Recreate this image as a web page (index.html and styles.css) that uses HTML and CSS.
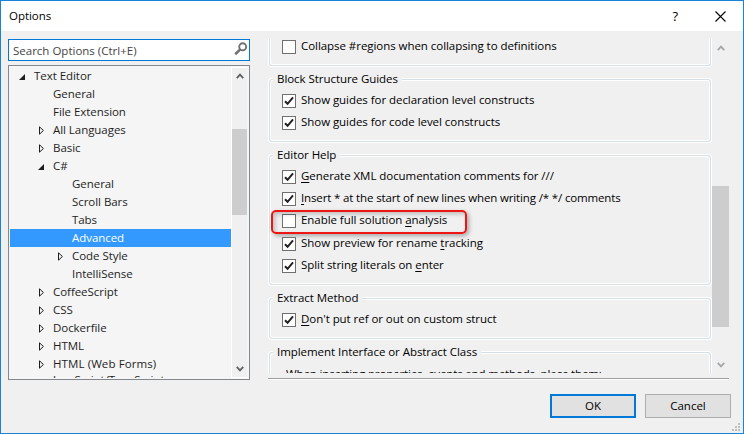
FILE: index.html
```
<!DOCTYPE html>
<html lang="en">
<head>
<meta charset="utf-8">
<title>Options</title>
<link rel="stylesheet" href="styles.css">
</head>
<body>
<svg width="0" height="0" class="defs">
  <symbol id="open" viewBox="0 0 6 6"><path d="M6 0V6H0z" fill="#1e1e1e"/></symbol>
  <symbol id="closed" viewBox="0 0 6 9"><path d="M.5 .8V8.2L4.4 4.5z" fill="none" stroke="#1e1e1e"/></symbol>
  <symbol id="check" viewBox="0 0 12 12"><path d="M2 6.2L4.6 8.8L10 2.4" fill="none" stroke="#212121" stroke-width="2"/></symbol>
  <symbol id="up" viewBox="0 0 8 6"><path d="M.8 5.2L4 1.7L7.2 5.2" fill="none" stroke="currentColor" stroke-width="1.8"/></symbol>
  <symbol id="down" viewBox="0 0 8 6"><path d="M.8 .8L4 4.3L7.2 .8" fill="none" stroke="currentColor" stroke-width="1.8"/></symbol>
</svg>
<div class="window">
  <header class="titlebar">
    <span class="title">Options</span>
    <span class="help">?</span>
    <svg class="close" width="11" height="11" viewBox="0 0 11 11"><path d="M.5 .5L10.5 10.5M10.5 .5L.5 10.5" stroke="#000" stroke-width="1.1"/></svg>
  </header>
  <main class="content">
    <aside class="sidebar">
      <div class="search"><span>Search Options (Ctrl+E)</span>
        <svg width="14" height="14" viewBox="0 0 14 14"><circle cx="8.7" cy="4.8" r="3.5" fill="none" stroke="#717171" stroke-width="1.9"/><path d="M6 7.6L1.2 12.2" stroke="#717171" stroke-width="2.6"/></svg>
      </div>
      <div class="tree">
        <ul class="nodes">
          <li class="l0"><svg class="open"><use href="#open"/></svg><span>Text Editor</span></li>
          <li class="l1"><span>General</span></li>
          <li class="l1"><span>File Extension</span></li>
          <li class="l1"><svg class="closed"><use href="#closed"/></svg><span>All Languages</span></li>
          <li class="l1"><svg class="closed"><use href="#closed"/></svg><span>Basic</span></li>
          <li class="l1"><svg class="open"><use href="#open"/></svg><span>C#</span></li>
          <li class="l2"><span>General</span></li>
          <li class="l2"><span>Scroll Bars</span></li>
          <li class="l2"><span>Tabs</span></li>
          <li class="l2 selected"><span>Advanced</span></li>
          <li class="l2"><svg class="closed"><use href="#closed"/></svg><span>Code Style</span></li>
          <li class="l2"><span>IntelliSense</span></li>
          <li class="l1"><svg class="closed"><use href="#closed"/></svg><span>CoffeeScript</span></li>
          <li class="l1"><svg class="closed"><use href="#closed"/></svg><span>CSS</span></li>
          <li class="l1"><svg class="closed"><use href="#closed"/></svg><span>Dockerfile</span></li>
          <li class="l1"><svg class="closed"><use href="#closed"/></svg><span>HTML</span></li>
          <li class="l1 caps"><svg class="closed"><use href="#closed"/></svg><span>HTML (Web Forms)</span></li>
          <li class="l1"><span>JavaScript/TypeScript</span></li>
        </ul>
        <div class="scrollbar tree-scroll">
          <svg class="arrow"><use href="#up"/></svg>
          <div class="thumb"></div>
          <svg class="arrow"><use href="#down"/></svg>
        </div>
      </div>
    </aside>
    <section class="pane">
      <div class="viewport">
        <div class="groups">
          <fieldset class="outlining">
            <label><i class="box"></i><span>Collapse #regions when collapsing to definitions</span></label>
          </fieldset>
          <fieldset class="guides">
            <legend>Block Structure Guides</legend>
            <label><i class="box"><svg><use href="#check"/></svg></i><span>Show guides for declaration level constructs</span></label>
            <label><i class="box"><svg><use href="#check"/></svg></i><span>Show guides for code level constructs</span></label>
          </fieldset>
          <fieldset class="editor-help">
            <legend>Editor Help</legend>
            <label><i class="box"><svg><use href="#check"/></svg></i><span><u>G</u>enerate XML documentation comments for ///</span></label>
            <label><i class="box"><svg><use href="#check"/></svg></i><span class="long"><u>I</u>nsert * at the start of new lines when writing /* */ comments</span></label>
            <label class="marked"><i class="box"></i><span>Enable full solution <u>a</u>nalysis</span><b class="callout"></b></label>
            <label><i class="box"><svg><use href="#check"/></svg></i><span>Show preview for rename <u>t</u>racking</span></label>
            <label><i class="box"><svg><use href="#check"/></svg></i><span>Split string literals on <u>e</u>nter</span></label>
          </fieldset>
          <fieldset class="extract">
            <legend>Extract Method</legend>
            <label><i class="box"><svg><use href="#check"/></svg></i><span><u>D</u>on't put ref or out on custom struct</span></label>
          </fieldset>
          <fieldset class="implement">
            <legend>Implement Interface or Abstract Class</legend>
            <p>When inserting properties, events and methods, place them:</p>
          </fieldset>
        </div>
        <div class="scrollbar pane-scroll">
          <svg class="arrow"><use href="#up"/></svg>
          <div class="thumb"></div>
          <svg class="arrow"><use href="#down"/></svg>
        </div>
      </div>
      <hr>
      <footer>
        <button class="primary">OK</button>
        <button>Cancel</button>
      </footer>
    </section>
  </main>
  <svg class="grip" width="8" height="8" viewBox="0 0 8 8" fill="#bfbfbf"><path d="M6 0h2v2H6zM3 3h2v2H3zM6 3h2v2H6zM0 6h2v2H0zM3 6h2v2H3zM6 6h2v2H6z"/></svg>
</div>
</body>
</html>
```
FILE: styles.css
```
* { box-sizing: border-box; }
body { margin: 0; font: 11.5px/18px "Open Sans", "Noto Sans", sans-serif; letter-spacing: -0.05px; color: #000; }
.defs { position: absolute; }
svg { display: block; flex: none; }
.window { position: relative; width: 744px; height: 434px; border: 1px solid #1883d7; background: #f0f0f0; overflow: hidden; }
.titlebar { display: flex; align-items: center; height: 30px; padding: 0 17px 0 8px; background: #fff; }
.title { flex: 1; }
.help { margin-right: 37px; font-size: 13px; font-weight: 500; }
.content { display: flex; gap: 18px; padding: 8px 0 0 7px; }

.sidebar { width: 242px; }
.search { display: flex; justify-content: space-between; height: 22px; padding: 2px 1px 0 4px; border: 1px solid #0078d7; background: #fff; color: #444; letter-spacing: 0; }
.tree { display: flex; height: 315px; margin-top: 4px; padding: 1px 2px 1px 1px; border: 1px solid #828790; background: #f5f5f5; }
.nodes { flex: 1; margin: 0; padding: 0; list-style: none; overflow: hidden; color: #1e1e1e; }
.nodes li { display: flex; align-items: center; height: 18px; white-space: nowrap; }
.nodes span { padding-bottom: 1px; }
.nodes li:last-child span { padding-bottom: 5px; }
.l0 { padding-left: 24px; }
.l1 { padding-left: 43px; }
.l2 { padding-left: 62px; }
.caps { letter-spacing: 0.1px; }
.nodes .selected { background: #3399ff; color: #fff; }
.open { width: 6px; height: 6px; margin: 1px 9px 0 -15px; }
.closed { width: 6px; height: 9px; margin: 1px 8px 0 -14px; }
.scrollbar { display: flex; flex-direction: column; align-items: center; flex: none; }
.arrow { width: 8px; height: 6px; }
.thumb { width: 100%; background: #cdcdcd; }
.tree-scroll { width: 16px; border: solid #fff; border-width: 1px 0 1px 1px; background: #f0f0f0; color: #606060; padding: 5px 0; }
.tree-scroll .thumb { height: 86px; margin: 50px 0 auto; }

.pane { width: 463px; }
.viewport { display: flex; height: 334px; overflow: hidden; }
.groups { flex: none; width: 444px; padding: 0 1px; }
fieldset { position: relative; margin: 0 0 13px; padding: 0 0 0 12px; border: 1px solid #d5dfe5; border-radius: 3px; box-shadow: inset 0 0 0 1px #fff, 0 0 0 1px #fff; }
legend { position: absolute; top: -10px; left: 3px; padding: 0 4px; background: #f0f0f0; line-height: 18px; }
label { position: relative; display: flex; align-items: center; height: 22px; white-space: nowrap; }
label span { padding-bottom: 2px; }
.long { letter-spacing: -0.14px; }
.box { display: block; width: 14px; height: 14px; margin-right: 5px; border: 1px solid #707070; background: #fff; }
.box svg { width: 12px; height: 12px; }
u { text-decoration: underline; text-underline-offset: 2px; }
.outlining { height: 27px; border-top: 0; border-radius: 0 0 3px 3px; box-shadow: inset 1px -1px 0 #fff, inset -1px 0 0 #fff, 0 1px 0 #fff, 1px 0 0 #fff, -1px 0 0 #fff; }
.outlining label { height: 15px; }
.outlining span { padding-bottom: 1px; }
.guides { height: 63px; padding-top: 10px; }
.editor-help { height: 130px; padding-top: 10px; }
.marked { margin-bottom: 1px; }
.callout { position: absolute; left: -11px; top: 0; width: 196px; height: 24px; border: 2px solid #ee1515; border-radius: 5px; box-shadow: 2px 2px 4px rgba(0,0,0,.3), inset 2px 2px 4px rgba(0,0,0,.22); }
.extract { height: 41px; padding-top: 10px; }
.implement { height: 60px; padding-top: 12px; }
.implement p { margin: 0 0 0 4px; white-space: nowrap; letter-spacing: -0.14px; }
.pane-scroll { width: 17px; color: #a6a6a6; padding-top: 6px; }
.pane-scroll .thumb { height: 141px; margin: 135px 0 35px; }
hr { margin: 5px 0 0; width: 461px; height: 2px; border: 0; background: linear-gradient(#a0a0a0 50%, #fff 50%); }
footer { display: flex; justify-content: flex-end; gap: 9px; margin-top: 14px; }
button { width: 86px; height: 24px; padding: 0; border: 1px solid #adadad; background: #e1e1e1; color: #000; font: inherit; }
.primary { border: 2px solid #0078d7; }
.grip { position: absolute; right: 3px; bottom: 2px; }
```
